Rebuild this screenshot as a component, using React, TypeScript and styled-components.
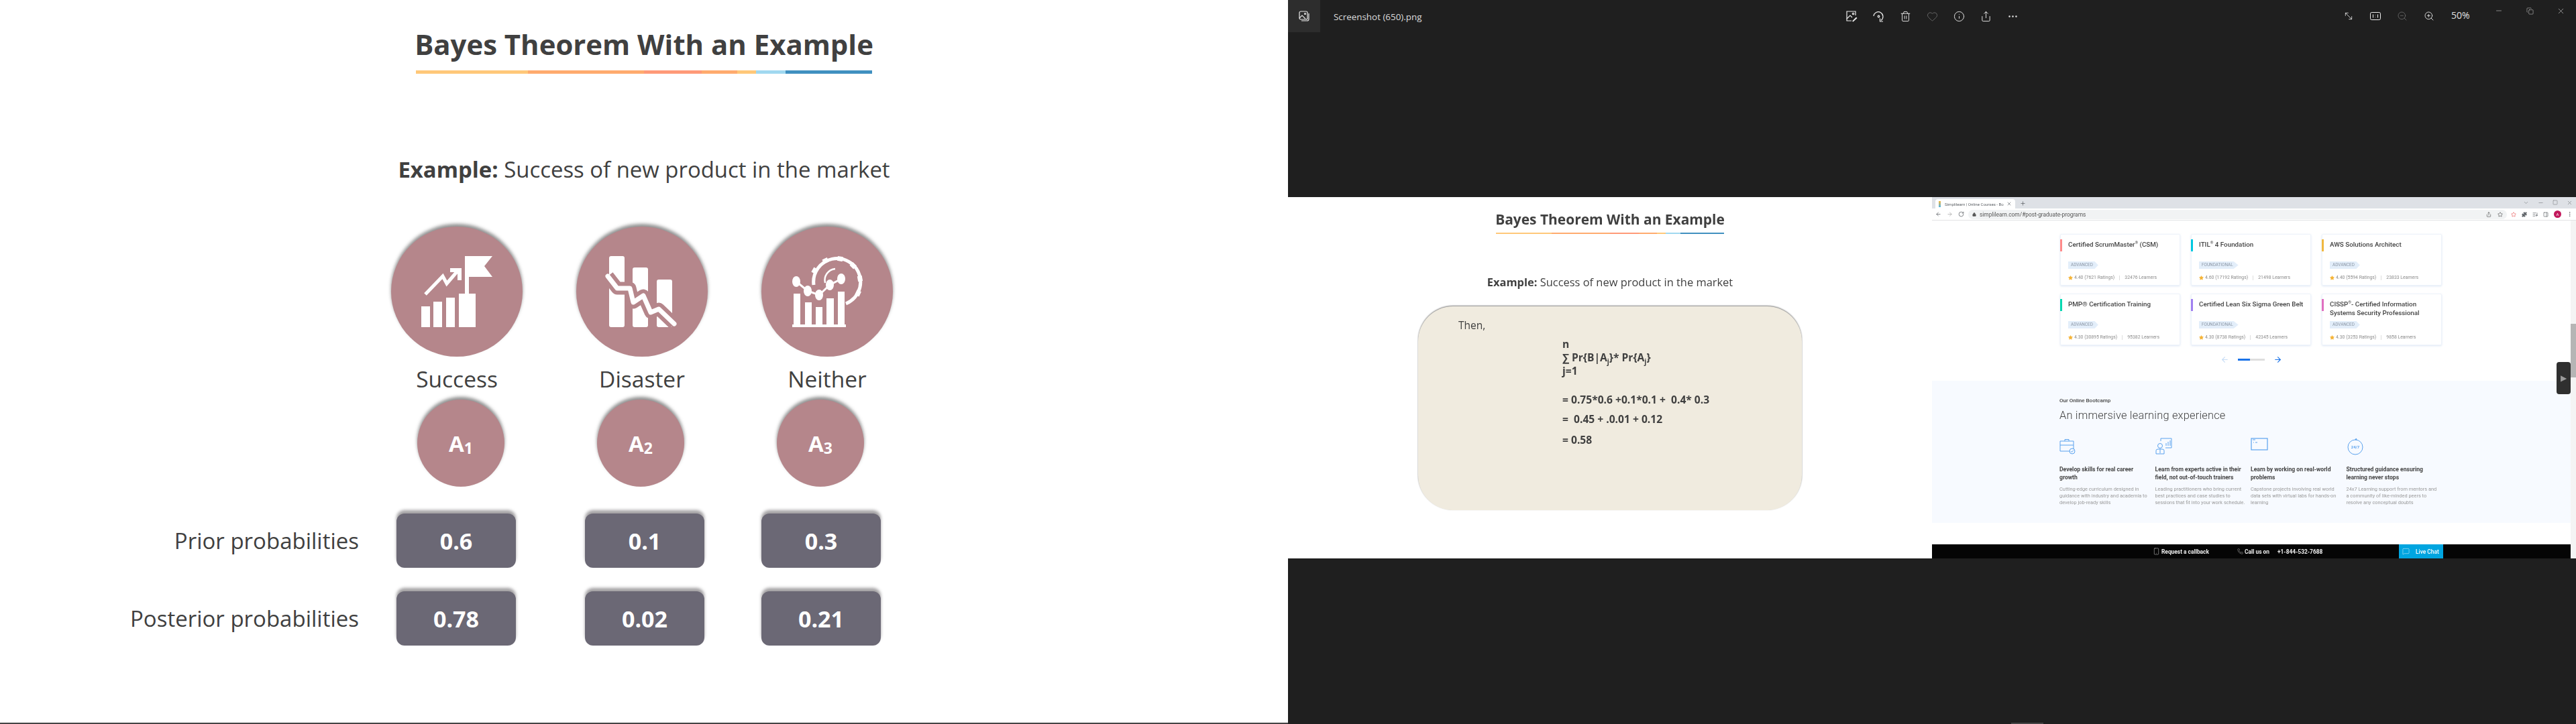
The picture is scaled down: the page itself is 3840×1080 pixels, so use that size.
import styled, { createGlobalStyle } from "styled-components";
import {
    ArrowLeft, ArrowRight, ChevronDown, Copy, Ellipsis, EllipsisVertical, Heart, Info, ListMusic, Lock, Minus,
    MoveDiagonal, PanelRight, Phone, Plus, Puzzle, RotateCw, Share, Smartphone, Square, Star, Trash2, X, ZoomIn, ZoomOut,
    MessageSquare,
} from "lucide-react";

const GlobalStyle = createGlobalStyle`
    html, body {
        margin: 0;
        padding: 0;
        background: #fff;
    }
    * {
        box-sizing: border-box;
    }
`;

const Page = styled.div`
    display: flex;
    width: 3840px;
    height: 1080px;
    overflow: hidden;
    font-family: "Open Sans", sans-serif;
`;

const LeftPanel = styled.div`
    width: 1920px;
    height: 1080px;
    background: #fff;
    border-bottom: 2px solid #444;
    color: #404040;
`;

/* --- the slide heading appears twice: full size and half size --- */
const Heading = styled.div<{ $k: number }>`
    display: flex;
    flex-direction: column;
    align-items: center;
    padding-top: ${p => p.$k * 34}px;
`;

const Title = styled.h1<{ $k: number }>`
    margin: 0;
    font-size: ${p => p.$k * 41.9}px;
    line-height: ${p => p.$k * 64}px;
    font-weight: 700;
    color: #404040;
`;

const Rainbow = styled.div<{ $k: number }>`
    width: ${p => p.$k * 680}px;
    height: ${p => p.$k * 5}px;
    margin-top: ${p => p.$k * 7}px;
    background: linear-gradient(90deg,
        #ffc879 0 24.5%, #ffab6e 24.5% 50%, #ff9a78 50% 62.6%, #ffab6e 62.6% 70.5%,
        #ffc879 70.5% 74.5%, #a0d8f0 74.5% 81%, #4090c0 81% 100%);
`;

const Example = styled.p<{ $k: number }>`
    margin: ${p => p.$k * 120}px 0 0;
    text-align: center;
    font-size: ${p => p.$k * 32.9}px;
    line-height: ${p => p.$k * 46}px;
    font-weight: 400;
    color: #404040;

    b {
        font-weight: 700;
    }
`;

/* --- scenario columns --- */
const OutcomeGrid = styled.div<{ $mt: number }>`
    display: grid;
    grid-template-columns: repeat(3, 196px);
    column-gap: 80px;
    padding-left: 583px;
    margin-top: ${p => p.$mt}px;
`;

const IconCircle = styled.div`
    width: 196px;
    height: 194px;
    border-radius: 50%;
    background: #b5868b;
    box-shadow: 0 -4px 5px rgba(70, 70, 70, 0.6);

    svg {
        display: block;
        margin-top: -6px;
    }
`;

const OutcomeLabel = styled.div`
    text-align: center;
    font-size: 33.5px;
    line-height: 46px;
    color: #404040;
`;

const EventGrid = styled.div`
    display: grid;
    grid-template-columns: repeat(3, 130px);
    column-gap: 138px;
    padding-left: 622px;
    margin-top: 8px;
`;

const EventCircle = styled.div`
    display: flex;
    align-items: center;
    justify-content: center;
    width: 130px;
    height: 130px;
    border-radius: 50%;
    background: #b5868b;
    box-shadow: 0 -4px 5px rgba(70, 70, 70, 0.6);
    color: #fff;
    font-size: 33px;
    font-weight: 700;

    sub {
        font-size: 23px;
        line-height: 0;
        position: relative;
        top: 7px;
        vertical-align: baseline;
    }
`;

const ProbRow = styled.div<{ $mt: number }>`
    display: grid;
    grid-template-columns: 591px 281px 263px 178px;
    align-items: center;
    margin-top: ${p => p.$mt}px;
`;

const ProbLabel = styled.div`
    padding-right: 56px;
    text-align: right;
    font-size: 33px;
    line-height: 46px;
    color: #404040;
`;

const ProbBox = styled.div`
    display: flex;
    align-items: center;
    justify-content: center;
    width: 178px;
    height: 81px;
    border-radius: 12px;
    background: #6b6875;
    box-shadow: 0 -5px 4px rgba(90, 85, 90, 0.55);
    color: #fff;
    font-size: 34px;
    font-weight: 700;
`;

/* --- right side: the photo viewer window --- */
const Viewer = styled.div`
    position: relative;
    display: flex;
    flex-direction: column;
    width: 1920px;
    height: 1080px;
    background: #1f1f1f;
`;

const Toolbar = styled.div`
    display: flex;
    height: 48px;
    color: #e8e8e8;
`;

const TabIcon = styled.div`
    display: flex;
    align-items: center;
    justify-content: center;
    width: 48px;
    height: 48px;
    background: #2d2d2d;
`;

const FileArea = styled.div`
    width: 784px;
    padding-left: 20px;
    font-size: 13.4px;
    line-height: 50px;
    color: #dcdcdc;
`;

const ToolGroup = styled.div<{ $ml?: number; $gap: number }>`
    display: flex;
    align-items: center;
    gap: ${p => p.$gap}px;
    margin-left: ${p => p.$ml || 0}px;
`;

const Tool = styled.span<{ $dim?: boolean }>`
    display: flex;
    color: ${p => (p.$dim ? "#6a6a6a" : "#ececec")};
`;

const Zoom = styled.span`
    margin-left: 25px;
    font-size: 14px;
    line-height: 46px;
    color: #e0e0e0;
`;

const WindowControls = styled.div`
    display: flex;
    margin-left: auto;
`;

const WindowButton = styled.span`
    display: flex;
    align-items: center;
    justify-content: center;
    width: 46px;
    height: 32px;
    color: #f0f0f0;
`;

const Shot = styled.div`
    display: flex;
    height: 539px;
    margin-top: 246px;
`;

const Slide = styled.div`
    width: 960px;
    background: #fff;
    filter: blur(0.3px);
`;

const FormulaCard = styled.div`
    width: 572px;
    height: 304px;
    margin: 25px auto 0;
    padding: 18px 0 0 60px;
    border-radius: 52px;
    background: #f0ebdf;
    box-shadow: 0 -1px 2px rgba(0, 0, 0, 0.5);
    color: #404040;
`;

const Then = styled.div`
    font-size: 15.5px;
    line-height: 20px;
`;

const Formula = styled.div<{ $mt: number }>`
    margin: ${p => p.$mt}px 0 0 155px;
    font-size: 15.6px;
    line-height: 20px;
    font-weight: 700;
    white-space: pre;

    sub {
        font-size: 10px;
        line-height: 0;
    }
`;

const BottomTick = styled.div`
    width: 48px;
    height: 2px;
    margin: auto 0 0 1078px;
    background: #444;
`;

/* --- the browser inside the photo --- */
const Browser = styled.div`
    position: relative;
    display: flex;
    flex-direction: column;
    width: 960px;
    background: #fff;
    font-family: Roboto, sans-serif;
    filter: blur(0.35px);
`;

const TabStrip = styled.div`
    display: flex;
    align-items: flex-end;
    height: 17px;
    padding-left: 5px;
    background: #dee1e6;
    color: #5f6368;
`;

const BrowserTab = styled.div`
    display: flex;
    align-items: center;
    width: 119px;
    height: 14px;
    padding: 0 5px;
    border-radius: 4px 4px 0 0;
    background: #fff;
    font-size: 6.1px;
    white-space: nowrap;
`;

const Favicon = styled.span`
    width: 3px;
    height: 9px;
    margin-right: 6px;
    flex-shrink: 0;
    background: linear-gradient(#f6b73c, #4fb4e8);
`;

const TabText = styled.span`
    flex: 1;
`;

const StripButtons = styled.div`
    display: flex;
    align-self: center;
    gap: 13px;
    margin-left: auto;
    margin-right: 5px;
    color: #8a8d92;
`;

const NavBar = styled.div`
    display: flex;
    align-items: center;
    height: 18px;
    padding-left: 5px;
    border-bottom: 1px solid #e2e3e5;
    background: #fff;
    color: #5f6368;
`;

const NavButtons = styled.div`
    display: flex;
    gap: 8px;
    width: 49px;
`;

const UrlBar = styled.div`
    display: flex;
    align-items: center;
    width: 803px;
    height: 14px;
    padding: 0 6px 0 6px;
    border-radius: 7px;
    background: #f1f3f4;
    font-size: 8.4px;
    color: #555;
`;

const UrlText = styled.span`
    margin-left: 5px;
    margin-right: auto;
`;

const UrlIcons = styled.div`
    display: flex;
    gap: 9px;
`;

const ExtIcons = styled.div`
    display: flex;
    align-items: center;
    gap: 8px;
    margin-left: 6px;
`;

const Avatar = styled.span`
    display: flex;
    align-items: center;
    justify-content: center;
    width: 11px;
    height: 11px;
    border-radius: 50%;
    background: #c2185b;
    color: #fff;
    font-size: 6px;
`;

const BrowserBody = styled.div`
    display: flex;
    flex: 1;
    min-height: 0;
`;

const WebPage = styled.div`
    display: flex;
    flex-direction: column;
    width: 952px;
`;

const CourseGrid = styled.div`
    display: grid;
    grid-template-columns: repeat(3, 179px);
    grid-auto-rows: 77px;
    gap: 12px 16px;
    padding: 20px 0 0 191px;
`;

const CourseCard = styled.div`
    display: flex;
    border: 1px solid #eef3fa;
    border-radius: 2px;
    box-shadow: 0 1px 3px rgba(120, 160, 220, 0.25);
`;

const Accent = styled.span<{ $color: string }>`
    width: 3px;
    height: 18px;
    margin: 7px 0 0 -1px;
    background: ${p => p.$color};
`;

const CardBody = styled.div`
    display: flex;
    flex-direction: column;
    padding: 8px 0 0 9px;
`;

const CourseTitle = styled.div`
    height: 32px;
    font-size: 9.8px;
    line-height: 13px;
    font-weight: 500;
    color: #444;
    white-space: nowrap;

    sup {
        font-size: 6px;
        line-height: 0;
        font-weight: 400;
    }
`;

const Level = styled.span`
    align-self: flex-start;
    height: 11px;
    padding: 0 8px 0 4px;
    background: #e3eefa;
    clip-path: polygon(0 0, 88% 0, 100% 50%, 88% 100%, 0 100%);
    font-size: 6.4px;
    line-height: 11px;
    color: #8b96a5;
`;

const RatingRow = styled.div`
    display: flex;
    align-items: center;
    margin-top: 8px;
    height: 10px;
    font-size: 6.9px;
    color: #8b8b8b;

    svg {
        margin-right: 2px;
    }
`;

const RatingSep = styled.span`
    width: 1px;
    height: 7px;
    margin: 0 7px;
    background: #ddd;
`;

const Pager = styled.div`
    display: flex;
    align-items: center;
    justify-content: center;
    gap: 13px;
    height: 14px;
    margin-top: 14px;
`;

const PagerTrack = styled.div`
    width: 40px;
    height: 3px;
    background: linear-gradient(90deg, #1a73e8 0 45%, #dedede 45% 100%);
`;

const Bootcamp = styled.section`
    height: 212px;
    margin-top: 25px;
    padding: 25px 0 0 190px;
    background: #f7faff;
`;

const Kicker = styled.div`
    font-size: 8px;
    line-height: 10px;
    font-weight: 500;
    color: #444;
`;

const BootcampTitle = styled.h2`
    margin: 4px 0 0;
    font-size: 16.4px;
    line-height: 26px;
    font-weight: 300;
    letter-spacing: 0.2px;
    color: #444;
`;

const Features = styled.div`
    display: grid;
    grid-template-columns: repeat(4, 142.5px);
    margin-top: 20px;
`;

const FeatureIcon = styled.svg`
    display: block;
    width: 26px;
    height: 26px;
    margin-bottom: 15px;
`;

const FeatureTitle = styled.div`
    font-size: 8.6px;
    line-height: 12px;
    font-weight: 700;
    color: #444;
    white-space: nowrap;
`;

const FeatureText = styled.div`
    margin-top: 7px;
    font-size: 7.4px;
    line-height: 10px;
    color: #9a9a9a;
    white-space: nowrap;
`;

const StickyBar = styled.div`
    display: flex;
    align-items: center;
    height: 21px;
    margin-top: 32px;
    padding-left: 329px;
    background: #050505;
    color: #eee;
    font-size: 8.4px;
    font-weight: 700;
`;

const BarItem = styled.span<{ $w: number }>`
    display: flex;
    align-items: center;
    gap: 2px;
    width: ${p => p.$w}px;
`;

const CallNumber = styled.span`
    margin-left: 10px;
`;

const LiveChat = styled.span`
    display: flex;
    align-items: center;
    gap: 9px;
    width: 66px;
    height: 21px;
    margin-left: auto;
    margin-right: 190px;
    padding-left: 5px;
    background: #00a5e0;
    color: #fff;
    font-weight: 500;
`;

const Scrollbar = styled.div`
    width: 8px;
    background: #f4f4f4;
    padding-top: 154px;
`;

const ScrollThumb = styled.div`
    height: 80px;
    background: #b5b5b5;
`;

const SideHandle = styled.div`
    position: absolute;
    left: 931px;
    top: 246px;
    display: flex;
    align-items: center;
    justify-content: center;
    width: 21px;
    height: 48px;
    border-radius: 4px;
    background: #2f2f2f;
    color: #9a9a9a;
    font-size: 12px;
`;

const SuccessIcon = () => (
    <svg width="196" height="200" viewBox="0 0 196 200" fill="#fff">
        <rect x="45" y="125" width="13" height="31" />
        <rect x="63" y="118" width="13" height="38" />
        <rect x="82" y="112" width="13" height="44" />
        <rect x="101" y="106" width="25" height="50" />
        <polygon points="110,50 151,50 139,65 151,81 116,81 116,106 110,106" />
        <polyline points="51,107 77,80 83,91 101,70" fill="none" stroke="#fff" strokeWidth="5" />
        <polygon points="88,68 105,68 105,86 99,86 99,74 88,74" />
    </svg>
);

const DisasterIcon = () => (
    <svg width="196" height="200" viewBox="0 0 196 200" fill="#fff">
        <rect x="49" y="50" width="23" height="106" rx="3" />
        <rect x="84" y="67" width="23" height="89" rx="3" />
        <rect x="120" y="85" width="23" height="71" rx="3" />
        <polyline
            points="47,80 61,98 80,98 85,119 100,109 111,134 123,129 146,151"
            fill="none" stroke="#b5868b" strokeWidth="19" strokeLinejoin="round"
        />
        <polyline
            points="47,80 61,98 80,98 85,119 100,109 111,134 123,129 146,151"
            fill="none" stroke="#fff" strokeWidth="7" strokeLinecap="round" strokeLinejoin="round"
        />
    </svg>
);

const NeitherIcon = () => (
    <svg width="196" height="200" viewBox="0 0 196 200" fill="#fff">
        <rect x="48" y="106" width="10" height="46" />
        <rect x="65" y="119" width="10" height="33" />
        <rect x="81" y="126" width="10" height="26" />
        <rect x="97" y="113" width="11" height="39" />
        <rect x="114" y="103" width="10" height="49" />
        <rect x="46" y="152" width="80" height="4" />
        <polyline points="52,88 69,102 86,108 102,93 119,84" fill="none" stroke="#fff" strokeWidth="3" />
        <ellipse cx="52" cy="88" rx="6" ry="8" />
        <ellipse cx="69" cy="102" rx="6" ry="8" />
        <ellipse cx="86" cy="108" rx="6" ry="8" />
        <ellipse cx="102" cy="93" rx="6" ry="8" />
        <ellipse cx="119" cy="84" rx="6" ry="8" />
        <path d="M78 93 A35 35 0 1 1 126 121" fill="none" stroke="#fff" strokeWidth="5" />
        <path d="M95 90 A17 17 0 0 1 110 69" fill="none" stroke="#fff" strokeWidth="2.5" />
        {[-60, -25, 10, 45, 80, 115].map(angle => (
            <rect key={angle} x="107" y="50" width="8" height="7" transform={`rotate(${angle} 111 90)`} />
        ))}
    </svg>
);

const PhotoIcon = () => (
    <svg width="16" height="16" viewBox="0 0 16 16" fill="none" stroke="currentColor" strokeWidth="1.2">
        <rect x="1" y="1" width="12" height="12" rx="2" />
        <path d="M1 11 L5 7 L10 12" />
        <circle cx="9.5" cy="4.5" r="1" />
        <path d="M4 15 H12.5 Q15 15 15 12.5 V4" />
    </svg>
);

const EditPhotoIcon = () => (
    <svg width="17" height="17" viewBox="0 0 17 17" fill="none" stroke="currentColor" strokeWidth="1.2">
        <path d="M8 15 H1 V1 H14 V7" />
        <path d="M1 12 L6 7 L9 10" />
        <circle cx="10.5" cy="4.5" r="1.2" />
        <path d="M9 15.5 L15 9.5 L16.5 11 L10.5 16.5 Z" fill="currentColor" stroke="none" />
    </svg>
);

const RotateIcon = () => (
    <svg width="17" height="17" viewBox="0 0 17 17" fill="none" stroke="currentColor" strokeWidth="1.2">
        <path d="M1 8 A7 7 0 1 1 12 14.5" />
        <circle cx="8.5" cy="8.5" r="1.3" />
        <path d="M10.5 11.5 V16 H15" />
    </svg>
);

const OneToOneIcon = () => (
    <svg width="16" height="12" viewBox="0 0 16 12" fill="none" stroke="currentColor" strokeWidth="1">
        <rect x="0.5" y="0.5" width="15" height="11" rx="2" />
        <path d="M4.5 3.5 V8.5 M11.5 3.5 V8.5 M8 4.5 V5 M8 7 V7.5" />
    </svg>
);

const BriefcaseIcon = () => (
    <FeatureIcon viewBox="0 0 26 26" fill="none" stroke="#5aa2ee" strokeWidth="1">
        <path d="M1 5 H21 V20 H1 Z M1 11 H21 M8 5 V2.5 H14 V5" />
        <circle cx="19" cy="20" r="4" fill="#f7faff" />
        <path d="M17 20 L18.5 21.5 L21 18.5" />
    </FeatureIcon>
);

const ExpertIcon = () => (
    <FeatureIcon viewBox="0 0 26 26" fill="none" stroke="#5aa2ee" strokeWidth="1">
        <path d="M8 5 V1 H24 V15 H15" />
        <path d="M16 12 V8 M19 12 V6 M22 12 V4" />
        <circle cx="7" cy="12" r="3.5" />
        <path d="M1 24 V19 Q1 17 4 17 H10 Q13 17 13 19 V24 Z M7 17 V23" />
    </FeatureIcon>
);

const TerminalIcon = () => (
    <FeatureIcon viewBox="0 0 26 26" fill="none" stroke="#5aa2ee" strokeWidth="1.2">
        <rect x="1" y="1" width="24" height="17" />
        <path d="M3 3 H7 M4 7 H5 M7 7 H10" />
    </FeatureIcon>
);

const ClockIcon = () => (
    <FeatureIcon viewBox="0 0 26 26" fill="none" stroke="#5aa2ee" strokeWidth="1">
        <circle cx="13" cy="14" r="11" />
        <path d="M13 3 L15 1.5" strokeWidth="2" />
        <text x="13" y="16" textAnchor="middle" fontSize="6" fontWeight="700" fill="#5aa2ee" stroke="none">24/7</text>
    </FeatureIcon>
);

const courses = [
    { color: "#ff8a8a", title: <>Certified ScrumMaster<sup>®</sup> (CSM)</>, level: "ADVANCED", rating: "4.40 (7621 Ratings)", learners: "32476 Learners" },
    { color: "#00c8e0", title: <>ITIL<sup>®</sup> 4 Foundation</>, level: "FOUNDATIONAL", rating: "4.60 (17192 Ratings)", learners: "21498 Learners" },
    { color: "#f0b840", title: <>AWS Solutions Architect</>, level: "ADVANCED", rating: "4.40 (5594 Ratings)", learners: "23833 Learners" },
    { color: "#00d8b0", title: <>PMP® Certification Training</>, level: "ADVANCED", rating: "4.30 (30895 Ratings)", learners: "95382 Learners" },
    { color: "#a080f0", title: <>Certified Lean Six Sigma Green Belt</>, level: "FOUNDATIONAL", rating: "4.30 (8738 Ratings)", learners: "42345 Learners" },
    { color: "#e070c0", title: <>CISSP<sup>®</sup>- Certified Information<br />Systems Security Professional</>, level: "ADVANCED", rating: "4.30 (3253 Ratings)", learners: "9858 Learners" },
];

const features = [
    { icon: <BriefcaseIcon />, title: ["Develop skills for real career", "growth"], text: ["Cutting-edge curriculum designed in", "guidance with industry and academia to", "develop job-ready skills"] },
    { icon: <ExpertIcon />, title: ["Learn from experts active in their", "field, not out-of-touch trainers"], text: ["Leading practitioners who bring current", "best practices and case studies to", "sessions that fit into your work schedule."] },
    { icon: <TerminalIcon />, title: ["Learn by working on real-world", "problems"], text: ["Capstone projects involving real world", "data sets with virtual labs for hands-on", "learning"] },
    { icon: <ClockIcon />, title: ["Structured guidance ensuring", "learning never stops"], text: ["24x7 Learning support from mentors and", "a community of like-minded peers to", "resolve any conceptual doubts"] },
];

const SlideHeading = ({ k }: { k: number }) => (
    <>
        <Heading $k={k}>
            <Title $k={k}>Bayes Theorem With an Example</Title>
            <Rainbow $k={k} />
        </Heading>
        <Example $k={k}><b>Example:</b> Success of new product in the market</Example>
    </>
);

function App() {
    return (
        <Page>
            <GlobalStyle />
            <LeftPanel>
                <SlideHeading k={1} />
                <OutcomeGrid $mt={62}>
                    <IconCircle><SuccessIcon /></IconCircle>
                    <IconCircle><DisasterIcon /></IconCircle>
                    <IconCircle><NeitherIcon /></IconCircle>
                </OutcomeGrid>
                <OutcomeGrid $mt={10}>
                    <OutcomeLabel>Success</OutcomeLabel>
                    <OutcomeLabel>Disaster</OutcomeLabel>
                    <OutcomeLabel>Neither</OutcomeLabel>
                </OutcomeGrid>
                <EventGrid>
                    <EventCircle>A<sub>1</sub></EventCircle>
                    <EventCircle>A<sub>2</sub></EventCircle>
                    <EventCircle>A<sub>3</sub></EventCircle>
                </EventGrid>
                <ProbRow $mt={40}>
                    <ProbLabel>Prior probabilities</ProbLabel>
                    <ProbBox>0.6</ProbBox>
                    <ProbBox>0.1</ProbBox>
                    <ProbBox>0.3</ProbBox>
                </ProbRow>
                <ProbRow $mt={35}>
                    <ProbLabel>Posterior probabilities</ProbLabel>
                    <ProbBox>0.78</ProbBox>
                    <ProbBox>0.02</ProbBox>
                    <ProbBox>0.21</ProbBox>
                </ProbRow>
            </LeftPanel>
            <Viewer>
                <Toolbar>
                    <TabIcon><PhotoIcon /></TabIcon>
                    <FileArea>Screenshot (650).png</FileArea>
                    <ToolGroup $gap={23}>
                        <Tool><EditPhotoIcon /></Tool>
                        <Tool><RotateIcon /></Tool>
                        <Tool><Trash2 size={17} strokeWidth={1.3} /></Tool>
                        <Tool $dim><Heart size={17} strokeWidth={1.3} /></Tool>
                        <Tool><Info size={17} strokeWidth={1.3} /></Tool>
                        <Tool><Share size={17} strokeWidth={1.3} /></Tool>
                        <Tool><Ellipsis size={17} strokeWidth={1.6} /></Tool>
                    </ToolGroup>
                    <ToolGroup $ml={484} $gap={24}>
                        <Tool><MoveDiagonal size={16} strokeWidth={1.2} style={{ transform: "scaleX(-1)" }} /></Tool>
                        <Tool><OneToOneIcon /></Tool>
                        <Tool $dim><ZoomOut size={16} strokeWidth={1.3} /></Tool>
                        <Tool><ZoomIn size={16} strokeWidth={1.3} /></Tool>
                    </ToolGroup>
                    <Zoom>50%</Zoom>
                    <WindowControls>
                        <WindowButton><Minus size={12} strokeWidth={1} /></WindowButton>
                        <WindowButton><Copy size={11} strokeWidth={1} /></WindowButton>
                        <WindowButton><X size={13} strokeWidth={1} /></WindowButton>
                    </WindowControls>
                </Toolbar>
                <Shot>
                    <Slide>
                        <SlideHeading k={0.5} />
                        <FormulaCard>
                            <Then>Then,</Then>
                            <Formula $mt={8}>n</Formula>
                            <Formula $mt={0}>∑ Pr{"{"}B|A<sub>j</sub>{"}"}* Pr{"{"}A<sub>j</sub>{"}"}</Formula>
                            <Formula $mt={0}>j=1</Formula>
                            <Formula $mt={23}>= 0.75*0.6 +0.1*0.1 +  0.4* 0.3</Formula>
                            <Formula $mt={9}>=  0.45 + .0.01 + 0.12</Formula>
                            <Formula $mt={11}>= 0.58</Formula>
                        </FormulaCard>
                    </Slide>
                    <Browser>
                        <TabStrip>
                            <BrowserTab>
                                <Favicon />
                                <TabText>Simplilearn | Online Courses - Bo</TabText>
                                <X size={8} />
                            </BrowserTab>
                            <Plus size={9} style={{ margin: "0 0 3px 7px" }} />
                            <StripButtons>
                                <ChevronDown size={9} />
                                <Minus size={9} />
                                <Square size={8} />
                                <X size={9} />
                            </StripButtons>
                        </TabStrip>
                        <NavBar>
                            <NavButtons>
                                <ArrowLeft size={9} />
                                <ArrowRight size={9} color="#aaa" />
                                <RotateCw size={9} />
                            </NavButtons>
                            <UrlBar>
                                <Lock size={6} fill="#555" />
                                <UrlText>simplilearn.com/#post-graduate-programs</UrlText>
                                <UrlIcons>
                                    <Share size={8} />
                                    <Star size={8} />
                                </UrlIcons>
                            </UrlBar>
                            <ExtIcons>
                                <Star size={8} color="#e85a5a" />
                                <Puzzle size={8} fill="#5f6368" />
                                <ListMusic size={8} />
                                <PanelRight size={8} />
                                <Avatar>A</Avatar>
                                <EllipsisVertical size={9} />
                            </ExtIcons>
                        </NavBar>
                        <BrowserBody>
                            <WebPage>
                                <CourseGrid>
                                    {courses.map((course, i) => (
                                        <CourseCard key={i}>
                                            <Accent $color={course.color} />
                                            <CardBody>
                                                <CourseTitle>{course.title}</CourseTitle>
                                                <Level>{course.level}</Level>
                                                <RatingRow>
                                                    <Star size={7} color="#f5b335" fill="#f5b335" />
                                                    {course.rating}
                                                    <RatingSep />
                                                    {course.learners}
                                                </RatingRow>
                                            </CardBody>
                                        </CourseCard>
                                    ))}
                                </CourseGrid>
                                <Pager>
                                    <ArrowLeft size={13} color="#c6dcf5" />
                                    <PagerTrack />
                                    <ArrowRight size={13} color="#1a73e8" />
                                </Pager>
                                <Bootcamp>
                                    <Kicker>Our Online Bootcamp</Kicker>
                                    <BootcampTitle>An immersive learning experience</BootcampTitle>
                                    <Features>
                                        {features.map(feature => (
                                            <div key={feature.title[0]}>
                                                {feature.icon}
                                                <FeatureTitle>
                                                    {feature.title.map(line => <div key={line}>{line}</div>)}
                                                </FeatureTitle>
                                                <FeatureText>
                                                    {feature.text.map(line => <div key={line}>{line}</div>)}
                                                </FeatureText>
                                            </div>
                                        ))}
                                    </Features>
                                </Bootcamp>
                                <StickyBar>
                                    <BarItem $w={126}><Smartphone size={11} strokeWidth={1} />Request a callback</BarItem>
                                    <BarItem $w={150}>
                                        <Phone size={9} strokeWidth={1} />Call us on
                                        <CallNumber>+1-844-532-7688</CallNumber>
                                    </BarItem>
                                    <LiveChat><MessageSquare size={11} strokeWidth={1} />Live Chat</LiveChat>
                                </StickyBar>
                            </WebPage>
                            <Scrollbar><ScrollThumb /></Scrollbar>
                        </BrowserBody>
                        <SideHandle>▶</SideHandle>
                    </Browser>
                </Shot>
                <BottomTick />
            </Viewer>
        </Page>
    );
}

export default App;
